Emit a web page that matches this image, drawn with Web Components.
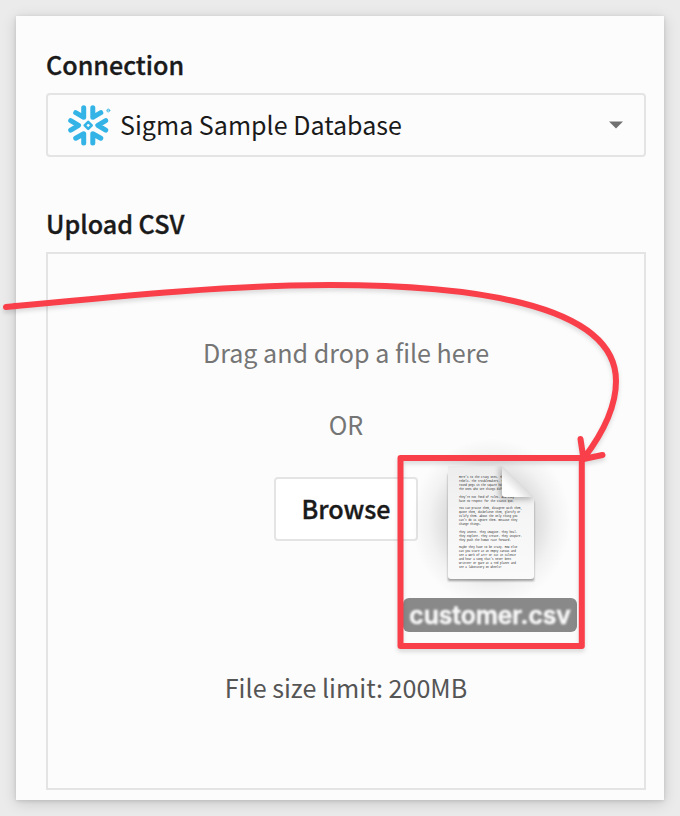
<!DOCTYPE html>
<html lang="en">
<head>
<meta charset="utf-8">
<title>Upload CSV</title>
<style>
html,body{margin:0;width:680px;height:816px;overflow:hidden;background:#ebebeb}
body{font-family:"Noto Sans CJK SC","Noto Sans",sans-serif;color:#1a1a1a;position:relative;display:flow-root}
</style>
</head>
<body>
<upload-panel>
  <form-field label="Connection"><connection-select>Sigma Sample Database</connection-select></form-field>
  <form-field label="Upload CSV"><drop-zone></drop-zone></form-field>
</upload-panel>
<dragged-file name="customer.csv"></dragged-file>
<drag-annotation></drag-annotation>
<script>
class Base extends HTMLElement{
  constructor(){super();this.attachShadow({mode:'open'}).innerHTML=this.view();}
  view(){return '';}
}
customElements.define('upload-panel',class extends Base{
  view(){return `<style>
  :host{display:flex;flex-direction:column;gap:46px;box-sizing:border-box;width:648px;height:784px;margin:16px;padding:28px 18px 10px 30px;background:#fcfcfc;box-shadow:0 3px 14px rgba(0,0,0,.15),0 1px 4px rgba(0,0,0,.12)}
  </style><slot></slot>`;}
});
customElements.define('form-field',class extends Base{
  view(){return `<style>
  :host{display:flex;flex-direction:column;gap:9px;width:600px}
  .l{height:40px;line-height:40px;font-size:25.1px;font-weight:500;white-space:nowrap;-webkit-text-stroke:.35px #1a1a1a}
  </style><div class="l">${this.getAttribute('label')}</div><slot></slot>`;}
});
customElements.define('connection-select',class extends Base{
  view(){return `<style>
  :host{display:flex;align-items:center;box-sizing:border-box;height:64px;border:2px solid #e4e4e4;border-radius:4px;padding:0 21px 0 19px;font-size:25.05px;line-height:40px}
  .t{flex:1;margin-left:9px;padding-bottom:2px;white-space:nowrap}
  svg{display:block;flex:none}
  </style>
  <svg width="44" height="44" viewBox="0 0 44 44" fill="none" stroke="#34b4e6" stroke-width="5" stroke-linecap="round" stroke-linejoin="round">
    <path d="M16.7 4.8V14.3L8.7 9.7M25.8 4.8V14.3L33.8 9.7M16.7 40V30.8L8.7 35.2M25.8 40V30.8L33.8 35.2"/>
    <path d="M3.7 17.6L11.6 22.3L3.7 27.1M38.7 17.6L30.8 22.3L38.7 27.1"/>
    <path d="M21.2 18.9L24.7 22.4L21.2 25.9L17.7 22.4Z" stroke-width="2.6"/>
    <circle cx="41.3" cy="7.5" r="1.5" stroke-width=".8"/><path d="M40.8 8V7h.8" stroke-width=".8"/>
  </svg>
  <span class="t"><slot></slot></span>
  <svg width="14" height="8" viewBox="0 0 14 8"><path d="M0 .5H14L7 7.5Z" fill="#707070"/></svg>`;}
});
customElements.define('drop-zone',class extends Base{
  view(){return `<style>
  :host{display:flex;flex-direction:column;align-items:center;box-sizing:border-box;height:538px;border:2px solid #e4e4e4;padding-top:78px;font-size:25.1px;line-height:40px;white-space:nowrap}
  .hint{color:#757575}.or{margin-top:32px}
  .limit{color:#555;margin-top:126px}
  button{margin-top:33px;box-sizing:border-box;width:144px;height:64px;padding:0 0 2px;border:2px solid #e4e4e4;border-radius:4px;background:#fff;color:#1a1a1a;font:500 25.1px/40px "Noto Sans CJK SC","Noto Sans",sans-serif;-webkit-text-stroke:.35px #1a1a1a}
  </style>
  <div class="hint">Drag and drop a file here</div><div class="hint or">OR</div>
  <button>Browse</button><div class="limit">File size limit: 200MB</div>`;}
});
const PARAGRAPHS=[
 ["Here's to the crazy ones. The","rebels. The troublemakers. The","round pegs in the square holes.","The ones who see things differ"],
 ["They're not fond of rules. And they","have no respect for the status quo."],
 ["You can praise them, disagree with them,","quote them, disbelieve them, glorify or","vilify them. About the only thing you","can't do is ignore them. Because they","change things."],
 ["They invent. They imagine. They heal.","They explore. They create. They inspire.","They push the human race forward."],
 ["Maybe they have to be crazy. How else","can you stare at an empty canvas and","see a work of art? Or sit in silence","and hear a song that's never been","written? Or gaze at a red planet and","see a laboratory on wheels?"]];
customElements.define('dragged-file',class extends Base{
  view(){
    let n=0;
    const lines=PARAGRAPHS.map(p=>{const s=p.map(l=>`<text x="59" y="${(38.3+3.89*n++).toFixed(2)}">${l}</text>`).join('');n++;return s;}).join('');
    return `<style>
  :host{position:absolute;left:400px;top:440px;width:180px;display:flex;flex-direction:column;align-items:center}
  svg{display:block;overflow:visible}
  .name{box-sizing:border-box;width:174px;height:34px;border-radius:6px;background:#898989;color:#f7f7f7;font:600 24.6px/34px Inter,sans-serif;text-align:center;white-space:nowrap;margin-top:-2px;-webkit-text-stroke:.6px #f7f7f7}
  .name span{display:block;filter:blur(.8px)}
  </style>
  <svg width="180" height="160" viewBox="0 0 180 160">
    <defs>
      <radialGradient id="halo"><stop offset="0" stop-color="#000" stop-opacity=".24"/><stop offset=".5" stop-color="#000" stop-opacity=".14"/><stop offset=".78" stop-color="#000" stop-opacity=".04"/><stop offset="1" stop-color="#000" stop-opacity="0"/></radialGradient>
      <linearGradient id="paper" x1="0" y1="0" x2="0" y2="1"><stop offset="0" stop-color="#ededed"/><stop offset=".5" stop-color="#f6f6f6"/><stop offset="1" stop-color="#fafafa"/></linearGradient>
      <linearGradient id="fold" gradientUnits="userSpaceOnUse" x1="101" y1="57" x2="117" y2="41"><stop offset="0" stop-color="#fff"/><stop offset=".55" stop-color="#fdfdfd"/><stop offset="1" stop-color="#dedede"/></linearGradient>
      <filter id="soft" x="-30%" y="-30%" width="160%" height="160%"><feGaussianBlur stdDeviation="1.3"/></filter>
      <filter id="wide" x="-30%" y="-30%" width="160%" height="160%"><feGaussianBlur stdDeviation="3"/></filter>
      <clipPath id="sheet"><path d="M48 26H102L134 57V136Q134 139 131 139H51Q48 139 48 136Z"/></clipPath>
    </defs>
    <ellipse cx="91" cy="82" rx="80" ry="84" fill="url(#halo)"/>
    <path d="M48 34H102L134 62V141H48Z" fill="#000" opacity=".35" filter="url(#soft)"/>
    <g clip-path="url(#sheet)">
      <rect x="48" y="26" width="86" height="113" fill="url(#paper)"/>
      <g font-family="Liberation Mono,monospace" font-size="2.63" fill="#1c1c1c">${lines}</g>
      <path d="M100 25V59H135Z" fill="#000" opacity=".3" filter="url(#wide)"/>
    </g>
    <path d="M102 26V54Q102 57 105 57H134Z" fill="url(#fold)"/>
  </svg>
  <div class="name"><span>${this.getAttribute('name')}</span></div>`;}
});
customElements.define('drag-annotation',class extends Base{
  view(){return `<style>
  :host{position:absolute;left:0;top:0;pointer-events:none}
  svg{display:block;filter:drop-shadow(0 3px 2px rgba(0,0,0,.13))}
  </style>
  <svg width="680" height="816" viewBox="0 0 680 816" fill="none" stroke="#f93f4a" stroke-width="6" stroke-linecap="round" stroke-linejoin="round">
    <rect x="400.5" y="458" width="181.3" height="188"/>
    <path d="M6 307C120 296 230 285 330 285C460 285 616 301 616 381C616 408 603 433 584 458M580.5 439L583.5 459L602.5 455"/>
  </svg>`;}
});
</script>
</body>
</html>
